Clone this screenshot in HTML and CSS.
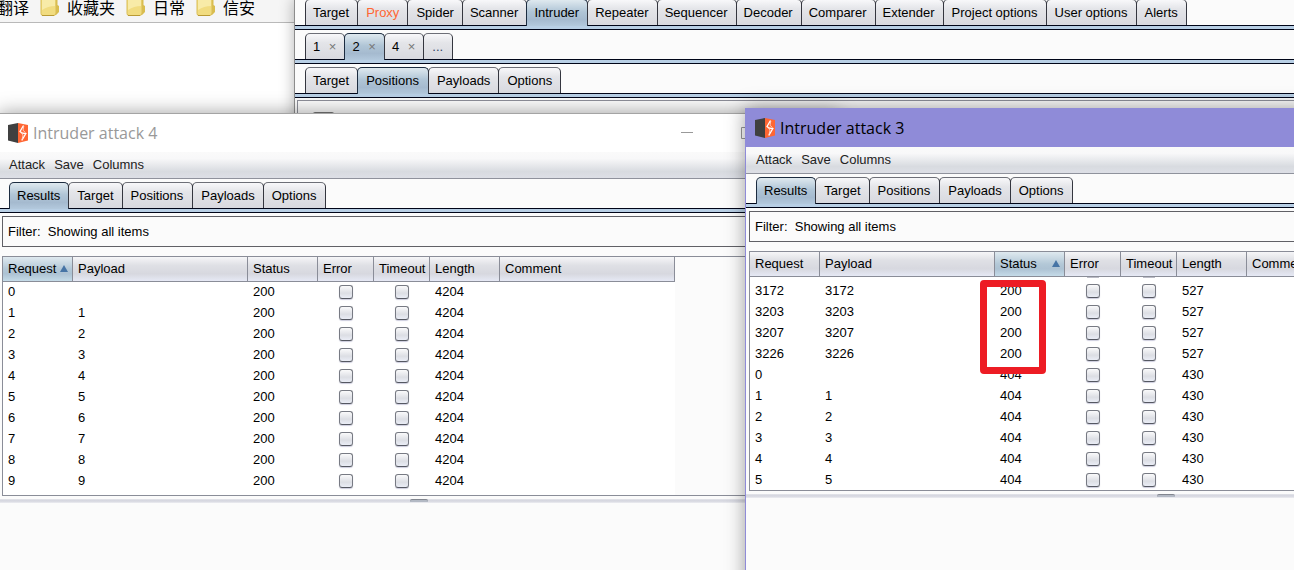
FILE: index.html
```html
<!DOCTYPE html>
<html lang="zh-CN">
<head>
<meta charset="utf-8">
<title>Intruder attack</title>
<link rel="stylesheet" href="styles.css">
</head>
<body>
<svg class="defs" aria-hidden="true">
  <symbol id="burp" viewBox="0 0 20 20">
    <path d="M0 2 10 0V20L0 17.500Z" fill="#404040"/>
    <path d="M10 0 20 2V17.500L10 20Z" fill="#ff6633"/>
    <path d="M15.500 2.500 12 8.500 14.500 10.200 17.800 10.600 13.800 17.500" fill="none" stroke="#fff" stroke-width="1.300"/>
    <path d="M15.800 3 15 7.300 17.500 9.500M12.500 9 15 12 14 17" fill="none" stroke="#ffe0d4" stroke-width=".8"/>
  </symbol>
  <symbol id="folder" viewBox="0 0 20 20">
    <path d="M5 3H17.500V8L19 9V15L16 18H5Z" fill="#d9bd4f"/>
    <path d="M1 1H16V16Q16 18.500 13.500 18.500H3Q1 18.500 1 16.500Z" fill="#f1dc80" stroke="#d9bd55"/>
    <path d="M2 2H15V9Q8 9 2 13Z" fill="#f8eba8"/>
    <path d="M2 18.500H14" stroke="#b99a34"/>
  </symbol>
</svg>

<nav class="bookmarks" aria-label="书签">
  <a href="#">翻译</a>
  <a href="#"><svg><use href="#folder"/></svg>收藏夹</a>
  <a href="#"><svg><use href="#folder"/></svg>日常</a>
  <a href="#"><svg><use href="#folder"/></svg>信安</a>
</nav>

<main class="suite">
  <div class="tabs">
    <button>Target</button><button class="wide alert">Proxy</button><button class="wide">Spider</button><button>Scanner</button><button class="on">Intruder</button><button>Repeater</button><button>Sequencer</button><button>Decoder</button><button>Comparer</button><button>Extender</button><button class="wide">Project options</button><button class="wide">User options</button><button class="wide">Alerts</button>
  </div>
  <div class="tabs numbered">
    <button>1 <span>×</span></button><button class="on">2 <span>×</span></button><button>4 <span>×</span></button><button class="more">...</button>
  </div>
  <div class="tabs">
    <button>Target</button><button class="wider on">Positions</button><button class="wide">Payloads</button><button class="wide">Options</button>
  </div>
  <div class="pane"><i></i></div>
</main>

<section class="window back">
  <header class="title"><svg class="logo"><use href="#burp"/></svg><h2>Intruder attack 4</h2>
    <div class="controls">
      <button aria-label="Minimize"><svg viewBox="0 0 12 12"><path d="M0 5.500H12"/></svg></button>
      <button aria-label="Maximize"><svg viewBox="0 0 12 12"><path d="M.5 .5H11.500V11.500H.5Z"/></svg></button>
      <button aria-label="Close"><svg viewBox="0 0 12 12"><path d="M0 0 12 12M12 0 0 12"/></svg></button>
    </div>
  </header>
  <div class="menu"><button>Attack</button><button>Save</button><button>Columns</button></div>
  <div class="tabs"><button class="on">Results</button><button class="wide">Target</button><button class="wider">Positions</button><button class="wide">Payloads</button><button class="wide">Options</button></div>
  <button class="filter">Filter:&nbsp; Showing all items</button>
  <div class="list">
    <table>
      <colgroup><col class="c70"><col class="c175"><col class="c70"><col class="c56"><col class="c56"><col class="c70"><col class="c175"></colgroup>
      <thead><tr><th class="sorted">Request</th><th>Payload</th><th>Status</th><th>Error</th><th>Timeout</th><th>Length</th><th>Comment</th></tr></thead>
      <tbody>
        <tr><td>0</td><td></td><td>200</td><td><input type="checkbox" aria-label="Error"></td><td><input type="checkbox" aria-label="Timeout"></td><td>4204</td><td></td></tr>
        <tr><td>1</td><td>1</td><td>200</td><td><input type="checkbox" aria-label="Error"></td><td><input type="checkbox" aria-label="Timeout"></td><td>4204</td><td></td></tr>
        <tr><td>2</td><td>2</td><td>200</td><td><input type="checkbox" aria-label="Error"></td><td><input type="checkbox" aria-label="Timeout"></td><td>4204</td><td></td></tr>
        <tr><td>3</td><td>3</td><td>200</td><td><input type="checkbox" aria-label="Error"></td><td><input type="checkbox" aria-label="Timeout"></td><td>4204</td><td></td></tr>
        <tr><td>4</td><td>4</td><td>200</td><td><input type="checkbox" aria-label="Error"></td><td><input type="checkbox" aria-label="Timeout"></td><td>4204</td><td></td></tr>
        <tr><td>5</td><td>5</td><td>200</td><td><input type="checkbox" aria-label="Error"></td><td><input type="checkbox" aria-label="Timeout"></td><td>4204</td><td></td></tr>
        <tr><td>6</td><td>6</td><td>200</td><td><input type="checkbox" aria-label="Error"></td><td><input type="checkbox" aria-label="Timeout"></td><td>4204</td><td></td></tr>
        <tr><td>7</td><td>7</td><td>200</td><td><input type="checkbox" aria-label="Error"></td><td><input type="checkbox" aria-label="Timeout"></td><td>4204</td><td></td></tr>
        <tr><td>8</td><td>8</td><td>200</td><td><input type="checkbox" aria-label="Error"></td><td><input type="checkbox" aria-label="Timeout"></td><td>4204</td><td></td></tr>
        <tr><td>9</td><td>9</td><td>200</td><td><input type="checkbox" aria-label="Error"></td><td><input type="checkbox" aria-label="Timeout"></td><td>4204</td><td></td></tr>
        <tr class="rest"><td></td><td></td><td></td><td></td><td></td><td></td><td></td></tr>
      </tbody>
    </table>
  </div>
  <div class="splitter"><i></i></div>
</section>

<section class="window front">
  <header class="title"><svg class="logo"><use href="#burp"/></svg><h2>Intruder attack 3</h2></header>
  <div class="menu"><button>Attack</button><button>Save</button><button>Columns</button></div>
  <div class="tabs"><button class="on">Results</button><button class="wide">Target</button><button class="wider">Positions</button><button class="wide">Payloads</button><button class="wide">Options</button></div>
  <button class="filter">Filter:&nbsp; Showing all items</button>
  <div class="list">
    <table>
      <colgroup><col class="c70"><col class="c175"><col class="c70"><col class="c56"><col class="c56"><col class="c70"><col class="c175"></colgroup>
      <thead><tr><th>Request</th><th>Payload</th><th class="sorted">Status</th><th>Error</th><th>Timeout</th><th>Length</th><th>Comment</th></tr></thead>
      <tbody>
        <tr class="cut"><td></td><td></td><td></td><td><i></i></td><td><i></i></td><td></td><td></td></tr>
        <tr><td>3172</td><td>3172</td><td>200</td><td><input type="checkbox" aria-label="Error"></td><td><input type="checkbox" aria-label="Timeout"></td><td>527</td><td></td></tr>
        <tr><td>3203</td><td>3203</td><td>200</td><td><input type="checkbox" aria-label="Error"></td><td><input type="checkbox" aria-label="Timeout"></td><td>527</td><td></td></tr>
        <tr><td>3207</td><td>3207</td><td>200</td><td><input type="checkbox" aria-label="Error"></td><td><input type="checkbox" aria-label="Timeout"></td><td>527</td><td></td></tr>
        <tr><td>3226</td><td>3226</td><td>200</td><td><input type="checkbox" aria-label="Error"></td><td><input type="checkbox" aria-label="Timeout"></td><td>527</td><td></td></tr>
        <tr><td>0</td><td></td><td>404</td><td><input type="checkbox" aria-label="Error"></td><td><input type="checkbox" aria-label="Timeout"></td><td>430</td><td></td></tr>
        <tr><td>1</td><td>1</td><td>404</td><td><input type="checkbox" aria-label="Error"></td><td><input type="checkbox" aria-label="Timeout"></td><td>430</td><td></td></tr>
        <tr><td>2</td><td>2</td><td>404</td><td><input type="checkbox" aria-label="Error"></td><td><input type="checkbox" aria-label="Timeout"></td><td>430</td><td></td></tr>
        <tr><td>3</td><td>3</td><td>404</td><td><input type="checkbox" aria-label="Error"></td><td><input type="checkbox" aria-label="Timeout"></td><td>430</td><td></td></tr>
        <tr><td>4</td><td>4</td><td>404</td><td><input type="checkbox" aria-label="Error"></td><td><input type="checkbox" aria-label="Timeout"></td><td>430</td><td></td></tr>
        <tr><td>5</td><td>5</td><td>404</td><td><input type="checkbox" aria-label="Error"></td><td><input type="checkbox" aria-label="Timeout"></td><td>430</td><td></td></tr>
      </tbody>
    </table>
  </div>
  <div class="splitter"><i></i></div>
  <div class="mark"></div>
</section>
</body>
</html>
```
FILE: styles.css
```css
* { box-sizing: border-box; }
html, body { height: 100%; }
body {
  margin: 0;
  position: relative;
  overflow: hidden;
  background: #fff;
  color: #000;
  font: 13px/16px "Liberation Sans", Arial, sans-serif;
}
button {
  margin: 0;
  padding: 0;
  border: 0;
  background: none;
  color: inherit;
  font: inherit;
  white-space: nowrap;
}
.defs { position: absolute; width: 0; height: 0; }

/* Browser bookmarks behind the windows */
.bookmarks {
  display: flex;
  gap: 11px;
  height: 23px;
  margin-left: -3px;
  background: #f5f5f5;
  border-bottom: 1px solid #b9b9b9;
}
.bookmarks a {
  display: flex;
  gap: 7px;
  height: 13px;
  align-items: center;
  color: #000;
  text-decoration: none;
  font: 16px/20px "Noto Sans CJK SC", sans-serif;
}
.bookmarks svg { width: 20px; height: 20px; }

/* Main window */
.suite {
  position: absolute;
  top: -1px;
  right: 0;
  bottom: 0;
  left: 294px;
  display: flex;
  flex-direction: column;
  gap: 3px;
  background: #fbfbfb;
  border-left: 1px solid #8c8c8c;
  box-shadow: 0 0 14px rgba(0, 0, 0, .3);
}
.pane {
  flex: 1;
  margin: -1px 0 0 2px;
  padding: 11px 0 0 15px;
  border: solid #8d8f99;
  border-width: 1px 0 0 1px;
}
.pane i { display: block; width: 21px; height: 6px; border-radius: 2px; background: #777; }

/* Tab strips */
.tabs {
  display: flex;
  height: 31px;
  padding: 0 10px 4px;
  background: linear-gradient(#00000000 26px, #000518 26px, #000518 27px, #b8cfe5 27px, #b8cfe5 30px, #000518 30px);
}
.tabs button {
  height: 26px;
  padding: 0 8px 0 7px;
  margin-right: -1px;
  border: 1px solid #34363f;
  border-top-color: #6d6f77;
  border-bottom: 0;
  border-radius: 5px 5px 0 0;
  background: linear-gradient(#f8f8fa, #e4e5e9 35%, #d8d9df);
}
.tabs .wide { padding: 0 8px; }
.tabs .wider { padding: 0 9px 0 8px; }
.tabs .on {
  height: 27px;
  border-color: #1c2c40;
  background: linear-gradient(#dfe9ef, #b0c5d6 45%, #a5bacf 75%, #b3c9dd);
}
.tabs .alert { color: #ff6633; }
.numbered span { padding-left: 5px; color: #777; }
.tabs .more { color: #346; padding: 0 9px 0 8px; }

/* Attack windows */
.window {
  position: absolute;
  bottom: -20px;
  width: 842px;
  background: #fbfbfb;
  border: 1px solid #a4a4a4;
  box-shadow: 0 0 18px rgba(0, 0, 0, .38);
}
.back { left: -2px; top: 113px; }
.front { left: 745px; top: 108px; border-color: #8f8bd8; }
.title {
  display: flex;
  align-items: center;
  gap: 5px;
  height: 38px;
  padding-left: 9px;
  background: #fff;
  color: #999;
}
.front .title { background: #8f8bd8; color: #000; }
.title h2 { flex: 1; margin: 0; font: 16px/22px "Open Sans", "Noto Sans", sans-serif; }
.logo { width: 20px; height: 20px; }
.controls { display: flex; padding-right: 2px; }
.controls button { display: flex; justify-content: center; width: 60px; }
.controls svg { width: 12px; height: 12px; fill: none; stroke: #999; }
.menu {
  display: flex;
  gap: 9px;
  height: 27px;
  padding: 0 10px;
  border-bottom: 1px solid #8f929c;
  background: linear-gradient(#fafafa, #f8f8f9 25%, #d8dbe0 75%, #dddfe6);
  color: #222;
}
.window .tabs { margin-top: 3px; }
.filter {
  display: block;
  width: calc(100% - 6px);
  height: 31px;
  margin: 3px;
  padding: 0 5px;
  border: 1px solid #606066;
  text-align: left;
}
.list {
  height: 240px;
  margin: 9px 3px 3px;
  overflow: hidden;
  border: 1px solid #8a8d98;
}
table { table-layout: fixed; width: 672px; border-collapse: separate; border-spacing: 0; }
.c70 { width: 70px; }
.c175 { width: 175px; }
.c56 { width: 56px; }
th {
  height: 25px;
  padding: 0 0 0 5px;
  text-align: left;
  font-weight: normal;
  border: solid #8a8d98;
  border-width: 0 1px 1px 0;
  background: linear-gradient(#f6f6f8, #dfe0e5 35%, #d7d8df 70%, #e6e9f5);
}
.sorted { background: linear-gradient(#dfe9ef, #b3c8d7 50%, #adc2d3 70%, #c5dbe8); }
.sorted::after {
  content: "";
  float: right;
  margin: 4px 4px 0 0;
  border: solid transparent;
  border-width: 0 4px 7px;
  border-bottom-color: #4674a5;
}
td { height: 21px; padding: 0 0 1px 5px; background: #fff; }
td:nth-child(4), td:nth-child(5) { padding: 0 0 1px; text-align: center; }
input {
  display: block;
  appearance: none;
  width: 14px;
  height: 14px;
  margin: 0 auto;
  border: 1px solid #777a83;
  border-bottom-color: #555862;
  border-radius: 3px;
  background: linear-gradient(#fafafb, #dcdee4 60%, #eaedf6);
  box-shadow: 0 1px 1px #ccd;
}
.cut td { height: 4px; vertical-align: top; line-height: 0; }
.cut i { display: block; width: 12px; height: 1px; margin: 0 auto; background: #bbbcc6; }
.rest td { height: 3px; }
.splitter { height: 4px; background: linear-gradient(#e4e5ea, #d6d7e0 40%, #dddee5 75%, #f0f0f4); }
.splitter i {
  display: block;
  width: 18px;
  height: 3px;
  margin: 0 auto;
  border-top: 1px solid #82868f;
  border-radius: 2px 2px 0 0;
  background: #b3b9c4;
}
.mark {
  position: absolute;
  left: 234px;
  top: 171px;
  width: 66px;
  height: 94px;
  border: 7px solid #ed1c24;
  border-radius: 4px;
}
```
